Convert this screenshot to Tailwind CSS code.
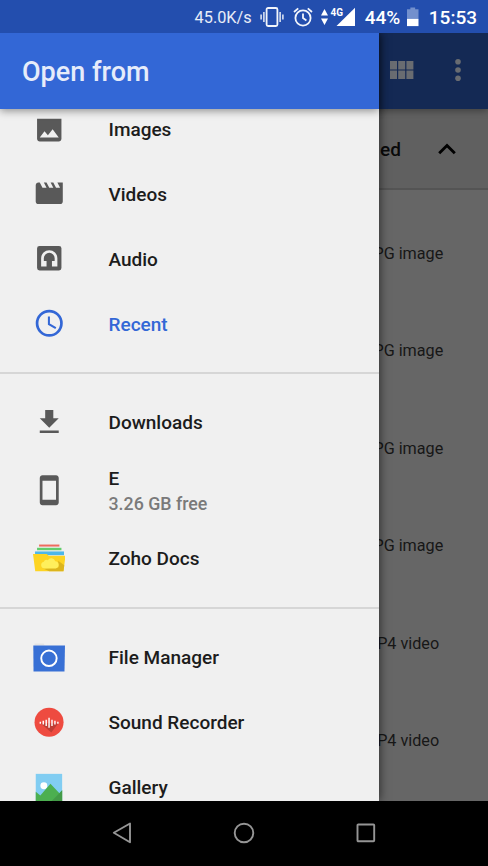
<!DOCTYPE html>
<html lang="en">
<head>
    <meta charset="UTF-8">
    <meta name="viewport" content="width=device-width, initial-scale=1.0">
    <title>Open from</title>
    <!-- Tailwind CSS -->
    <script src="https://cdn.jsdelivr.net/npm/@tailwindcss/browser@4"></script>
</head>
<body class="font-['Roboto',sans-serif] bg-black">

    <div class="flex flex-col w-[488px] h-[866px] overflow-hidden">

        <!-- Status Bar -->
        <div class="flex items-center justify-end h-[33px] shrink-0 pr-[11px] bg-[#234eae] text-white">
            <span class="text-[16.3px] leading-none mt-[3px] text-white/90">45.0K/s</span>
            <svg class="w-6 h-5 ml-[8px] mt-[1px]" viewBox="0 0 24 20" fill="none" stroke="#f2f5fb" stroke-width="1.8">
                <rect x="6.6" y="1" width="10.8" height="18" rx="1.5"/>
                <path d="M3.9 5v10M1.1 7.5v5M20.1 5v10M22.9 7.5v5" stroke-width="1.4"/>
            </svg>
            <svg class="w-5 h-5 ml-[9px] mt-[1px]" viewBox="0 0 20 20" fill="none" stroke="#f2f5fb" stroke-width="1.8">
                <circle cx="10" cy="11" r="7.6"/>
                <path d="M10 6.5V11l3.4 2.4M1 5l4.2-3.6M19 5l-4.2-3.6"/>
            </svg>
            <div class="flex items-start ml-[8px] h-5 mt-[1px]">
                <svg class="w-[7px] h-4 mt-[2px]" viewBox="0 0 7 16" fill="#fff"><path d="M3.5 0L7 6.6H0zM3.5 16L0 9.4h7z"/></svg>
                <svg class="w-[25px] h-5 ml-[2px]" viewBox="0 0 25 20" fill="#fff">
                    <path d="M25 .8V19H6.5z"/>
                    <path d="M0 0h14v9.5L10 11H0z" fill="#234eae"/>
                    <text x="0.5" y="8.6" font-size="10" font-weight="700" textLength="12.5" lengthAdjust="spacingAndGlyphs">4G</text>
                </svg>
            </div>
            <span class="text-[19px] leading-none font-medium ml-[10px] mr-[1px] mt-[2px]">44%</span>
            <svg class="w-[11.5px] h-5 ml-[6px] mt-[1px]" viewBox="0 0 12 20">
                <path d="M3.5 0h5v2H12v10H0V2h3.5z" fill="#7390cd"/>
                <path d="M0 12h12v7.5H0z" fill="#fff"/>
            </svg>
            <span class="text-[19px] leading-none font-medium ml-[10px] mt-[2px]">15:53</span>
        </div>

        <!-- Screen -->
        <div class="relative h-[768px] shrink-0 overflow-hidden bg-[#666]">

            <!-- File list behind the drawer -->
            <div class="flex flex-col h-full pl-[364.5px]">
                <div class="relative flex items-center h-[75.5px] shrink-0 -ml-[364.5px] pl-[390px] pb-[1px] bg-[#142954] shadow-[0_2px_7px_rgba(0,0,0,0.35)]">
                    <svg class="w-6 h-[18px]" viewBox="0 0 24 18" fill="#696c71"><path d="M0 0h7v8.4H0zM8.2 0h7v8.4h-7zM16.4 0h7v8.4h-7zM0 9.6h7V18H0zM8.2 9.6h7V18h-7zM16.4 9.6h7V18h-7z"/></svg>
                    <svg class="w-2 h-[22px] ml-[40px]" viewBox="0 0 8 22" fill="#696c71"><circle cx="4" cy="2.8" r="2.8"/><circle cx="4" cy="11" r="2.8"/><circle cx="4" cy="19.2" r="2.8"/></svg>
                </div>
                <div class="flex items-center justify-between h-[81px] shrink-0 -ml-[364.5px] pr-[32px] bg-[#606060] border-b-2 border-[#545454]">
                    <span class="w-[401px] text-right text-[19px] font-medium text-[#0a0a0a] mt-[4px]">ed</span>
                    <svg class="w-[18px] h-3 mt-[1px]" viewBox="0 0 18 12" fill="none" stroke="#000" stroke-width="2.9"><path d="M1.2 10.2L9 2.5l7.8 7.7"/></svg>
                </div>
                <div class="flex flex-col text-[16.2px] text-[#171717] pt-[16px]">
                    <div class="h-[97.4px] flex items-center">JPG image</div>
                    <div class="h-[97.4px] flex items-center">JPG image</div>
                    <div class="h-[97.4px] flex items-center">JPG image</div>
                    <div class="h-[97.4px] flex items-center">JPG image</div>
                    <div class="h-[97.4px] flex items-center -ml-[1.5px]">MP4 video</div>
                    <div class="h-[97.4px] flex items-center -ml-[1.5px]">MP4 video</div>
                </div>
            </div>

            <!-- Drawer -->
            <div class="absolute inset-y-0 left-0 w-[379px] flex flex-col bg-[#f0f0f0] shadow-[1px_0_9px_rgba(0,0,0,0.55)]">
                <div class="relative z-10 flex items-center h-[75.5px] shrink-0 pl-[22px] bg-[#3367d6] shadow-[0_2px_8px_rgba(0,0,0,0.4)]">
                    <h1 class="text-[27px] font-medium leading-none text-[#e6ecfa] mt-[3.5px]">Open from</h1>
                </div>

                <div class="flex-1 min-h-0 overflow-hidden">
                    <div class="-mt-[12px] text-[19px] leading-[25px] font-medium text-[#1c1c1c]">
                        <div class="flex items-center h-[65px] pl-[32.5px] gap-[43.5px]">
                            <svg class="w-[32.5px] h-[32.5px] shrink-0" viewBox="0 0 24 24" fill="#595959"><path d="M21 19V4.3H3V19c0 1.1.9 2 2 2h14c1.1 0 2-.9 2-2zM8.5 13.5l2.5 3.01L14.5 12l4.5 6H5l3.5-4.5z"/></svg>
                            <span>Images</span>
                        </div>
                        <div class="flex items-center h-[65px] pl-[32.5px] gap-[43.5px]">
                            <svg class="w-[32.5px] h-[32.5px] shrink-0 -mt-[1px]" viewBox="0 0 24 24" fill="#595959"><path d="M18 4l2 4h-3l-2-4h-2l2 4h-3l-2-4H8l2 4H7L5 4H4c-1.1 0-1.99.9-1.99 2L2 18c0 1.1.9 2 2 2h16c1.1 0 2-.9 2-2V4h-4z"/></svg>
                            <span>Videos</span>
                        </div>
                        <div class="flex items-center h-[65px] pl-[32.5px] gap-[43.5px]">
                            <svg class="w-[32.5px] h-[32.5px] shrink-0 -mt-[1px]" viewBox="0 0 24 24">
                                <rect x="3" y="3" width="18" height="18" rx="1.8" fill="#595959"/>
                                <path d="M6 18v-6a6 6 0 0 1 12 0v6h-4v-4h2v-2a4 4 0 0 0-8 0v2h2v4z" fill="#f0f0f0"/>
                            </svg>
                            <span>Audio</span>
                        </div>
                        <div class="flex items-center h-[65px] pl-[32.5px] gap-[43.5px] text-[#3367d6]">
                            <svg class="w-[32.5px] h-[32.5px] shrink-0 -mt-[1px]" viewBox="0 0 24 24" fill="none" stroke="currentColor"><circle cx="12" cy="12" r="9" stroke-width="2"/><path d="M11.75 7v5.6l5.1 3.05" stroke-width="1.5"/></svg>
                            <span>Recent</span>
                        </div>

                        <div class="mt-[15.5px] mb-[16px] h-[2px] bg-[#d6d6d6]"></div>

                        <div class="flex items-center h-[65px] pl-[32.5px] gap-[43.5px]">
                            <svg class="w-[32.5px] h-[32.5px] shrink-0 -mt-[1px]" viewBox="0 0 24 24" fill="#595959"><path d="M19 9h-4V3H9v6H5l7 7 7-7zM5 18v2h14v-2H5z"/></svg>
                            <span>Downloads</span>
                        </div>
                        <div class="flex items-center h-[71px] pl-[32.5px] gap-[43.5px]">
                            <svg class="w-[32.5px] h-[32.5px] shrink-0 -mt-[1px]" viewBox="0 0 24 24" fill="#595959"><path d="M17 1.01L7 1c-1.1 0-1.99.9-1.99 2v18c0 1.1.89 2 1.99 2h10c1.1 0 2-.9 2-2V3c0-1.1-.9-1.99-2-1.99zM17 19H7V5h10v14z"/></svg>
                            <div class="flex flex-col">
                                <span>E</span>
                                <span class="text-[17.8px] text-[#7a7a7a]">3.26 GB free</span>
                            </div>
                        </div>
                        <div class="flex items-center h-[65px] pl-[32.5px] gap-[43.5px]">
                            <svg class="w-[32.5px] h-[32.5px] shrink-0" viewBox="0 0 32 32">
                                <path d="M6 2.5h20v2H6z" fill="#ee6b5f"/>
                                <path d="M4 5.7h24v2.4H4z" fill="#62cd6c"/>
                                <path d="M2 9.3h28.5V13H2z" fill="#4db7ea"/>
                                <path d="M0 11.7h13.5l2 1.8H32L30 28.7H2.2z" fill="#fdd423"/>
                                <path d="M24.8 18.5l6 4.5-.8 5.7H16l-6-2.7 15-1z" fill="#dcb51d"/>
                                <path d="M11 26a3.3 3.3 0 0 1-.4-6.5 3 3 0 0 1 4-1.6 4 4 0 0 1 7.3 1A3.6 3.6 0 0 1 22.5 26z" fill="#ffef5c"/>
                            </svg>
                            <span>Zoho Docs</span>
                        </div>

                        <div class="mt-[15.5px] mb-[16px] h-[2px] bg-[#d6d6d6]"></div>

                        <div class="flex items-center h-[65px] pl-[32.5px] gap-[43.5px]">
                            <svg class="w-[32.5px] h-[32.5px] shrink-0 mt-[1px]" viewBox="0 0 32 32">
                                <path d="M1.5 2.5h9l1 2h-10z" fill="#e3e3e3"/>
                                <path d="M.3 4.5h31.2L31 30H.5z" fill="#3870d5"/>
                                <circle cx="15.7" cy="17" r="7.6" fill="none" stroke="#fff" stroke-width="1.9"/>
                            </svg>
                            <span>File Manager</span>
                        </div>
                        <div class="flex items-center h-[65px] pl-[32.5px] gap-[43.5px]">
                            <svg class="w-[32.5px] h-[32.5px] shrink-0" viewBox="0 0 32 32">
                                <circle cx="15.8" cy="16" r="14.3" fill="#ee4b40"/>
                                <path d="M7.5 17h17.5l-7 9z" fill="#bf3d34"/>
                                <path d="M7.2 15.4v2M10.1 14.5v3.8M13 13.5v6.2M15.8 11.5v10M18.7 13.5v6.2M21.6 14.5v3.8M24.5 15.4v2" stroke="#fff" stroke-width="1.4"/>
                            </svg>
                            <span>Sound Recorder</span>
                        </div>
                        <div class="flex items-center h-[65px] pl-[32.5px] gap-[43.5px]">
                            <svg class="w-[32.5px] h-[32.5px] shrink-0" viewBox="0 0 32 32">
                                <path d="M2.7 2.8h26V30h-26z" fill="#81cdf2"/>
                                <circle cx="10.7" cy="14.5" r="3.4" fill="#fff"/>
                                <path d="M2.7 20.5l4.5 3.5 10-11.5L26 22l2.7-3v11h-26z" fill="#4caf50"/>
                                <path d="M26 22l2.7-3v11H18z" fill="#439a47"/>
                            </svg>
                            <span>Gallery</span>
                        </div>
                    </div>
                </div>
            </div>
        </div>

        <!-- Navigation Bar -->
        <div class="flex items-center justify-between flex-1 px-[112px] pb-[1px] bg-black">
            <svg class="w-5 h-[22px]" viewBox="0 0 20 22" fill="none" stroke="#959595" stroke-width="1.9" stroke-linejoin="round"><path d="M18 1.5v18.7L1.8 10.8z"/></svg>
            <svg class="w-[22px] h-[22px]" viewBox="0 0 22 22" fill="none" stroke="#959595" stroke-width="1.9"><circle cx="11" cy="11" r="9.3"/></svg>
            <svg class="w-5 h-5" viewBox="0 0 20 20" fill="none" stroke="#959595" stroke-width="1.9"><rect x="1.5" y="1.5" width="16.7" height="16.7" rx="0.8"/></svg>
        </div>
    </div>

</body>
</html>
